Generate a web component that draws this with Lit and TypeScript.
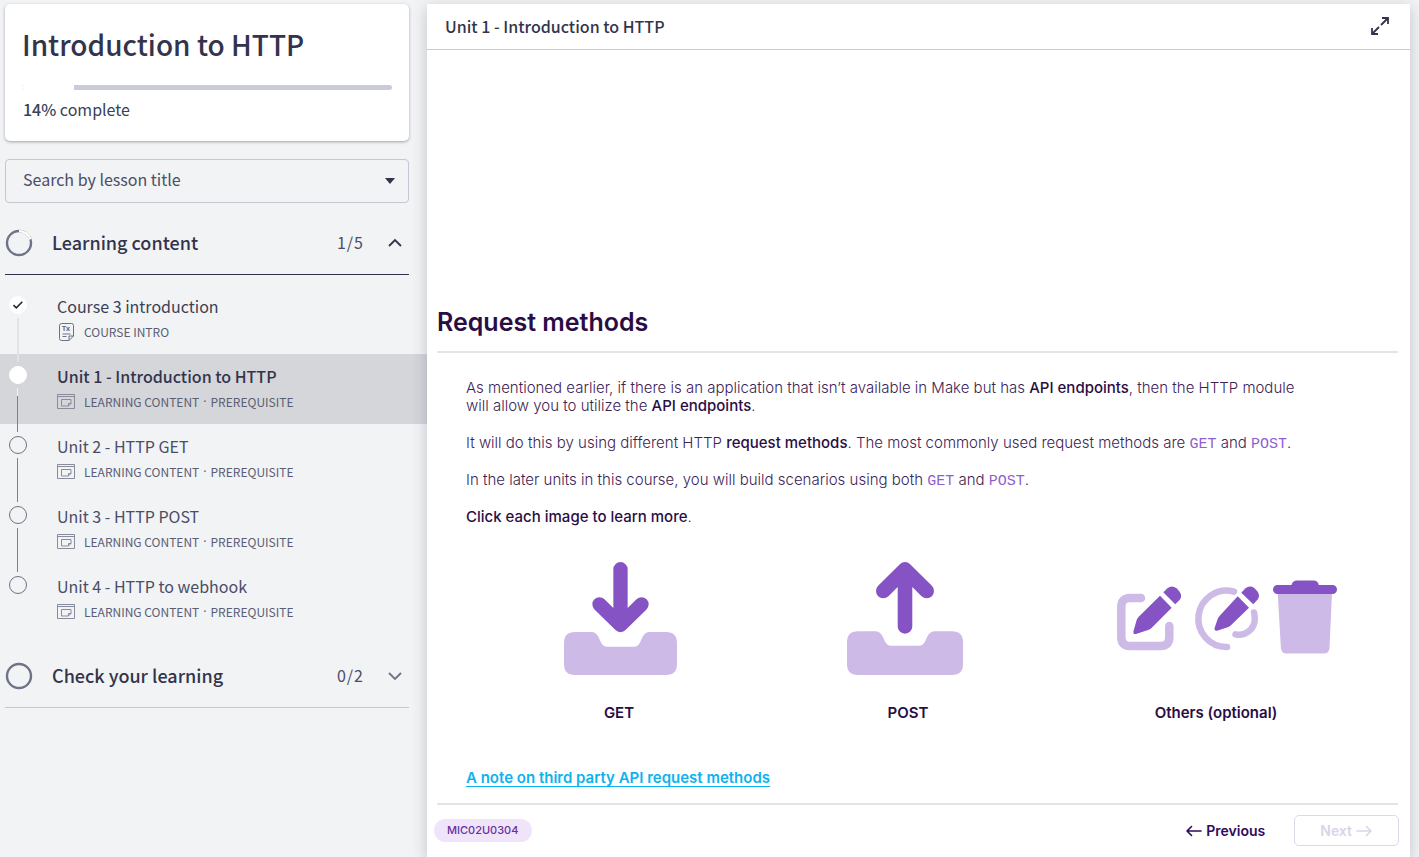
import { LitElement, html, css, svg, nothing } from "lit";
import { customElement, property, state } from "lit/decorators.js";
import { classMap } from "lit/directives/class-map.js";

interface Lesson {
  title: string;
  meta: string[];
  icon: "text" | "module";
  state: "done" | "active" | "todo";
}

const LESSONS: Lesson[] = [
  { title: "Course 3 introduction", meta: ["COURSE INTRO"], icon: "text", state: "done" },
  { title: "Unit 1 - Introduction to HTTP", meta: ["LEARNING CONTENT", "PREREQUISITE"], icon: "module", state: "active" },
  { title: "Unit 2 - HTTP GET", meta: ["LEARNING CONTENT", "PREREQUISITE"], icon: "module", state: "todo" },
  { title: "Unit 3 - HTTP POST", meta: ["LEARNING CONTENT", "PREREQUISITE"], icon: "module", state: "todo" },
  { title: "Unit 4 - HTTP to webhook", meta: ["LEARNING CONTENT", "PREREQUISITE"], icon: "module", state: "todo" },
];

const textIcon = html`<svg width="18" height="20" viewBox="0 0 18 20" fill="none" stroke="#6b7186" aria-hidden="true">
  <path d="M4.500 1.500h10a2 2 0 0 1 2 2v10.500l-4.500 4.500h-7.500a2 2 0 0 1-2-2v-13a2 2 0 0 1 2-2z" />
  <path d="M16.500 14h-4.500v4.500M5.500 12h8M5.500 14.500h4" />
  <text x="5" y="9" font-size="7" font-weight="700" font-family="Noto Sans, sans-serif" fill="#6b7186" stroke="none">Tx</text>
</svg>`;

const moduleIcon = html`<svg width="18" height="16" viewBox="0 0 18 16" fill="none" stroke="#878b9b" aria-hidden="true">
  <path d="M.5 .5h17v14H.5zM.5 2.500h17" />
  <path d="M4.500 5.500h9.500v4l-2.500 2.500h-7zM14 9.500h-2.500v2.500" />
</svg>`;

@customElement("lesson-row")
class LessonRow extends LitElement {
  @property({ attribute: false }) lesson!: Lesson;
  @property({ type: Boolean }) last = false;

  static styles = css`
    :host { display: block; }
    .row {
      display: grid;
      grid-template-columns: 35px 1fr;
      gap: 22px;
      height: 70px;
      color: #4a4d66;
      text-decoration: none;
    }
    .active { background: #d5d6da; color: #33344c; }
    .rail { display: flex; flex-direction: column; align-items: center; gap: 4px; }
    .before, .after { width: 1px; background: #7c7f8f; }
    .before { height: 8px; }
    .after { flex: 1; }
    .done .after, .active .before { width: 2px; background: #e2e3e6; }
    .active .after { background: linear-gradient(#f1f2f4 8px, #7c7f8f 8px); }
    .first .before, .hidden { visibility: hidden; }
    .dot {
      display: grid;
      place-items: center;
      box-sizing: border-box;
      width: 18px;
      height: 18px;
      border: 1px solid #6e7285;
      border-radius: 50%;
    }
    .done .dot, .active .dot { background: #fff; border-color: #fff; }
    .text { padding-top: 10px; }
    .title { font-size: 16px; line-height: 24px; }
    .done .title { color: #3c3f56; }
    .active .title { font-weight: 500; }
    .meta {
      display: flex;
      align-items: center;
      gap: 9px;
      font-size: 12px;
      line-height: 20px;
      padding-top: 4px;
      color: #5b5e75;
    }
    .meta svg { flex: none; }
    .labels { display: flex; gap: 4px; }
    .labels i { font-family: "Noto Sans", sans-serif; font-style: normal; }
  `;

  render() {
    const { title, meta, icon, state } = this.lesson;
    return html`<a href="#lesson" class=${classMap({ row: true, [state]: true, first: state === "done" })}>
      <span class="rail">
        <span class="before"></span>
        <span class="dot">${state === "done"
          ? html`<svg width="12" height="10" viewBox="0 0 12 10" fill="none" stroke="#26273a" stroke-width="1.600"><path d="M1.500 5.200l2.800 2.600 6-6" /></svg>`
          : nothing}</span>
        <span class=${classMap({ after: true, hidden: this.last })}></span>
      </span>
      <span class="text">
        <div class="title">${title}</div>
        <div class="meta">
          ${icon === "text" ? textIcon : moduleIcon}
          <span class="labels">${meta.map((m, i) => html`${i ? html`<i>·</i>` : nothing}<span>${m}</span>`)}</span>
        </div>
      </span>
    </a>`;
  }
}

@customElement("section-head")
class SectionHead extends LitElement {
  @property() label = "";
  @property({ type: Number }) done = 0;
  @property({ type: Number }) total = 1;
  @property({ type: Boolean }) open = false;

  static styles = css`
    :host { display: block; padding: 0 18px 0 5px; }
    .head {
      display: flex;
      align-items: center;
      width: 100%;
      height: 63px;
      padding: 0 7px 0 0;
      border: 0;
      border-bottom: 1px solid #c5c8d3;
      background: none;
      color: #33344c;
      font: inherit;
      text-align: left;
      cursor: pointer;
    }
    .open { border-bottom-color: #33344c; }
    .label, .count { padding-bottom: 2px; }
    .label { flex: 1; padding-left: 19px; font-size: 18px; font-weight: 500; }
    .count { font-size: 16px; letter-spacing: 1px; padding-right: 24px; color: #4a4d66; }
    .ring { flex: none; }
  `;

  render() {
    const length = 2 * Math.PI * 12;
    const part = (length * this.done) / this.total;
    return html`<button class=${classMap({ head: true, open: this.open })} aria-expanded=${this.open}>
      <svg class="ring" width="28" height="28" viewBox="0 0 28 28" fill="none" stroke-width="2.400">
        <circle cx="14" cy="14" r="12" stroke="#6e7385" />
        ${this.done
          ? svg`<circle cx="14" cy="14" r="12" stroke="#fff" stroke-dasharray="${part} ${length}" transform="rotate(-90 14 14)" />`
          : nothing}
      </svg>
      <span class="label">${this.label}</span>
      <span class="count">${this.done}/${this.total}</span>
      <svg width="14" height="10" viewBox="0 0 14 10" fill="none" stroke=${this.open ? "#33344c" : "#6e7385"} stroke-width="1.800">
        <path d=${this.open ? "M1 8l6-6 6 6" : "M1 2l6 6 6-6"} />
      </svg>
    </button>`;
  }
}

@customElement("course-sidebar")
class CourseSidebar extends LitElement {
  @state() private percent = 14;

  static styles = css`
    :host { display: block; padding-top: 4px; }
    .card {
      margin: 0 18px 18px 5px;
      padding: 20px 17px;
      border-radius: 5px;
      background: #fff;
      box-shadow: 0 1px 3px rgba(60, 62, 70, 0.45);
    }
    h1 { margin: 0; font-size: 28px; line-height: 40px; font-weight: 500; color: #33344c; }
    .track { margin-top: 21px; height: 5px; border-radius: 3px; background: #c9cbd6; overflow: hidden; }
    .fill { height: 100%; background: #fff; }
    .status { margin: 0; padding: 7px 1px 0; font-size: 16px; line-height: 24px; color: #3c3f56; }
    .status b { font-weight: 500; }
    .search { display: grid; align-items: center; margin: 0 18px 9px 5px; }
    .search select, .search svg { grid-area: 1 / 1; }
    .search svg { justify-self: end; margin-right: 14px; pointer-events: none; }
    select {
      appearance: none;
      width: 100%;
      height: 44px;
      padding: 0 17px 4px;
      border: 1px solid #c5c8d3;
      border-radius: 4px;
      background: transparent;
      color: #4a4d66;
      font: inherit;
      font-size: 16px;
    }
    ol { list-style: none; margin: 0; padding: 9px 0 11px; }
  `;

  render() {
    return html`
      <section class="card">
        <h1>Introduction to HTTP</h1>
        <div class="track" role="progressbar" aria-label="Course progress" aria-valuenow=${this.percent}>
          <div class="fill" style="width:${this.percent}%"></div>
        </div>
        <p class="status"><b>${this.percent}%</b> complete</p>
      </section>
      <div class="search">
        <select aria-label="Search by lesson title">
          <option>Search by lesson title</option>
        </select>
        <svg width="10" height="6" viewBox="0 0 10 6" fill="#33344c"><path d="M0 0h10L5 6z" /></svg>
      </div>
      <section-head label="Learning content" done="1" total="5" open></section-head>
      <ol>
        ${LESSONS.map((l, i) => html`<li><lesson-row .lesson=${l} ?last=${i === LESSONS.length - 1}></lesson-row></li>`)}
      </ol>
      <section-head label="Check your learning" done="0" total="2"></section-head>
    `;
  }
}

const getArt = html`<svg width="118" height="114" viewBox="-4 0 118 114" aria-hidden="true">
  <path fill="#cdbae7" d="M11 70H27Q32 70 34.500 75L37 80.500Q39 84.700 43 84.700H70Q74 84.700 76 80.500L78.500 75Q81 70 86 70H102Q113 70 113 81V102Q113 113 102 113H11Q0 113 0 102V81Q0 70 11 70Z" />
  <path fill="none" stroke="#8553c3" stroke-width="14.300" stroke-linecap="round" stroke-linejoin="round" d="M56.500 7.200V63M35.500 42.300L56.500 63L77.500 42.300" />
</svg>`;

const postArt = html`<svg width="122" height="114" viewBox="0 0 122 114" aria-hidden="true">
  <path fill="#cdbae7" d="M11 69.300H28Q33 69.300 35.500 74.300L38 79.500Q40 83.700 44 83.700H72Q76 83.700 78 79.500L80.500 74.300Q83 69.300 88 69.300H105Q116 69.300 116 80.300V102Q116 113 105 113H11Q0 113 0 102V80.300Q0 69.300 11 69.300Z" />
  <path fill="none" stroke="#8553c3" stroke-width="14.600" stroke-linecap="round" stroke-linejoin="round" d="M58 7.300V64.400M36.300 29L58 7.300L79.700 29" />
</svg>`;

const othersArt = html`<svg width="242" height="114" viewBox="-22 -18 242 114" aria-hidden="true">
  <g fill="none" stroke="#cdbae7" stroke-linecap="round">
    <path stroke-width="8.500" d="M24 18H13Q4.300 18 4.300 27V57Q4.300 66 13 66H43.500Q52.300 66 52.300 57V46" />
    <path stroke-width="6.500" d="M110 67A28.200 28.200 0 1 1 117 11.600M137 32.500A28 28 0 0 1 137.800 39A15.800 15.800 0 0 1 118.500 54.300" />
  </g>
  <g fill="#8553c3">
    <path d="M43 15.700L54.700 27.700L34.500 48Q33 49.500 31 50L19 54Q16 54.500 16.400 51.500L19.500 40.500Q20 38.500 21.500 37Z" />
    <path d="M46.300 12.300L50.500 8.200Q54.700 4.800 59.500 8.200L62.500 11.500Q65.500 16 62.800 19.800L58.200 24.300Z" />
    <path d="M120.700 16.300L132 27.700L113.700 45.500Q112 47 110 47.500L100 50.700Q97 51 97.600 48L100.500 39.500Q101 37.500 102.500 36Z" />
    <path d="M124.300 12.700L128.500 8.200Q132.500 4.800 137.300 7.900L140.500 11.500Q143.300 15.500 140.800 19.300L136.300 24.300Z" />
  </g>
  <path fill="#cdbae7" d="M160.700 13H215L212.500 68Q212.200 73.500 206.500 73.500H170Q164.200 73.500 163.900 68Z" />
  <path fill="#8553c3" d="M160.500 5H174.500Q175.500 .5 180 .5H196.500Q201 .5 201.800 5H215.500A4.500 4.500 0 0 1 215.500 14H160.500A4.500 4.500 0 0 1 160.500 5Z" />
</svg>`;

@customElement("lesson-view")
class LessonView extends LitElement {
  static styles = css`
    :host {
      display: flex;
      flex-direction: column;
      margin: 4px 9px 0 0;
      background: #fff;
      box-shadow: 0 4px 14px rgba(40, 42, 52, 0.24);
    }
    .bar {
      display: flex;
      align-items: center;
      justify-content: space-between;
      height: 43px;
      padding: 0 20px 2px 18px;
      border-bottom: 1px solid #c9cad2;
      color: #33344c;
    }
    .bar h2 { margin: 0; font-size: 16px; line-height: 24px; font-weight: 500; }
    .bar button { display: flex; padding: 0; border: 0; background: none; cursor: pointer; }
    .page { padding: 254px 12px 10px 10px; font-family: Inter, sans-serif; color: #2b0d45; }
    .page > h3 {
      margin: 0;
      padding-bottom: 11px;
      border-bottom: 2px solid #e7e2e5;
      font-size: 25px;
      line-height: 36px;
      font-weight: 600;
      color: #2b0d45;
    }
    .body { padding: 26px 10px 16px 29px; font-size: 15px; line-height: 18px; border-bottom: 2px solid #e7e2e5; }
    p { margin: 0 0 19px; max-width: 850px; font-weight: 300; color: #3d2356; }
    p b { font-weight: 500; color: #2b0d45; }
    code { font-family: "Liberation Mono", monospace; line-height: 1; color: #8f5fd0; }
    .methods { display: grid; grid-template-columns: 306fr 272fr 344fr; padding-top: 17px; }
    .method {
      display: flex;
      flex-direction: column;
      align-items: center;
      gap: 27px;
      padding: 0;
      border: 0;
      background: none;
      font: 600 15px/20px Inter, sans-serif;
      color: #2b0d45;
      cursor: pointer;
    }
    .note { display: inline-block; margin-top: 46px; font-weight: 600; color: #0db3ee; text-decoration-thickness: 1px; text-underline-offset: 3px; }
    .foot { display: flex; align-items: center; justify-content: space-between; margin: 0 -1px 0 -3px; padding-top: 10px; }
    .tag { padding: 0 14px 0 13px; border-radius: 12px; background: #f0e4fb; color: #68309c; font-size: 11px; line-height: 23px; font-weight: 500; }
    .nav { display: flex; align-items: center; gap: 29px; }
    .nav button {
      display: flex;
      align-items: center;
      gap: 4px;
      padding: 0;
      border: 0;
      background: none;
      font: 600 14px/29px Inter, sans-serif;
      color: #2e0a5c;
    }
    .nav .next { padding: 0 26px 0 25px; border: 1px solid #dfd7ea; border-radius: 5px; color: #dcd3e8; }
  `;

  render() {
    return html`
      <header class="bar">
        <h2>Unit 1 - Introduction to HTTP</h2>
        <button aria-label="Expand">
          <svg width="20" height="20" viewBox="0 0 20 20" fill="none" stroke="#33344c" stroke-width="1.800">
            <path d="M12 2h6v6M18 2l-7 7M2 12v6h6M2 18l7-7" />
          </svg>
        </button>
      </header>
      <article class="page">
        <h3>Request methods</h3>
        <div class="body">
          <p>As mentioned earlier, if there is an application that isn’t available in Make but has <b>API endpoints</b>, then the HTTP module will allow you to utilize the <b>API endpoints</b>.</p>
          <p>It will do this by using different HTTP <b>request methods</b>. The most commonly used request methods are <code>GET</code> and <code>POST</code>.</p>
          <p>In the later units in this course, you will build scenarios using both <code>GET</code> and <code>POST</code>.</p>
          <p><b>Click each image to learn more</b>.</p>
          <div class="methods">
            <button class="method">${getArt}<span>GET</span></button>
            <button class="method">${postArt}<span>POST</span></button>
            <button class="method">${othersArt}<span>Others (optional)</span></button>
          </div>
          <a class="note" href="#note">A note on third party API request methods</a>
        </div>
        <footer class="foot">
          <span class="tag">MIC02U0304</span>
          <div class="nav">
            <button>
              <svg width="16" height="12" viewBox="0 0 16 12" fill="none" stroke="#2e0a5c" stroke-width="1.600" stroke-linecap="round" stroke-linejoin="round"><path d="M15 6H1M5.500 1.500L1 6l4.500 4.500" /></svg>
              Previous
            </button>
            <button class="next" disabled>
              Next
              <svg width="16" height="12" viewBox="0 0 16 12" fill="none" stroke="#dcd3e8" stroke-width="1.600" stroke-linecap="round" stroke-linejoin="round"><path d="M1 6h14M10.500 1.500L15 6l-4.500 4.500" /></svg>
            </button>
          </div>
        </footer>
      </article>
    `;
  }
}

@customElement("app-root")
class AppRoot extends LitElement {
  static styles = css`
    :host {
      display: grid;
      grid-template-columns: 427px minmax(0, 1fr);
      min-height: 100vh;
      overflow: hidden;
      background: #f1f3f5;
      font-family: "Noto Sans CJK SC", "Noto Sans", sans-serif;
    }
  `;

  render() {
    return html`<course-sidebar></course-sidebar><lesson-view></lesson-view>`;
  }
}
